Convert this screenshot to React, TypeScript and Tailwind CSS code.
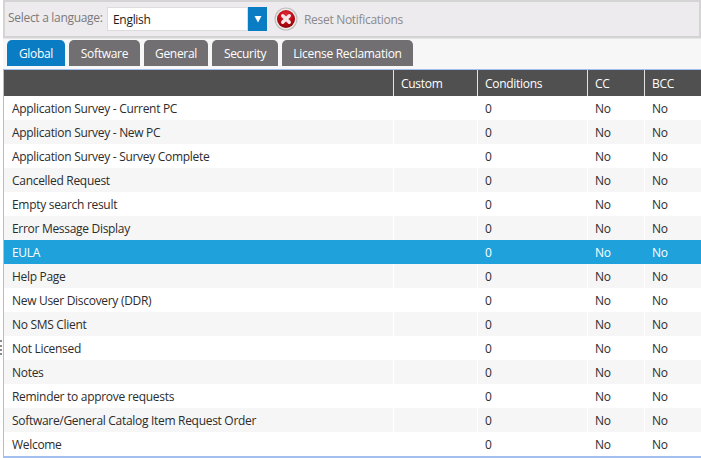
const tabs = [
  { label: "Software", width: "w-[71px]" },
  { label: "General", width: "w-[64px]" },
  { label: "Security", width: "w-[66px]" },
  { label: "License Reclamation", width: "w-[131px]" },
];

const rows = [
  "Application Survey - Current PC",
  "Application Survey - New PC",
  "Application Survey - Survey Complete",
  "Cancelled Request",
  "Empty search result",
  "Error Message Display",
  "EULA",
  "Help Page",
  "New User Discovery (DDR)",
  "No SMS Client",
  "Not Licensed",
  "Notes",
  "Reminder to approve requests",
  "Software/General Catalog Item Request Order",
  "Welcome",
];

const App = () => {
  return (
    <div className="relative w-[701px] h-[458px] overflow-hidden bg-white text-[12px] font-['Open_Sans',sans-serif] flex flex-col pl-[3px] tracking-[-0.3px]">
      {/* splitter grip */}
      <div className="absolute left-0 top-[340px] h-[15px] w-[2px] border-l-2 border-dotted border-[#8a8a8a]" />

      {/* Toolbar */}
      <div className="h-[38px] shrink-0 flex items-center bg-[#eeebee] border-2 border-[#d4d4d4] pl-[3px]">
        <span className="text-[#7a7a7a] mr-[3px] mb-[3px] w-[96px] shrink-0 whitespace-nowrap">Select a language:</span>
        <div className="flex items-stretch h-[24px] w-[160px]">
          <div className="flex-1 bg-white border border-[#dcdcdc] flex items-center pl-[5px] pt-[1px] text-[#1c1c1c]">English</div>
          <div className="w-[19px] bg-[#0a7cc4] flex items-center justify-center">
            <svg width="8" height="8" viewBox="0 0 8 8">
              <path d="M0.5 1h7L4 7.5z" fill="#ffffff" />
            </svg>
          </div>
        </div>
        <svg className="ml-[7px]" width="24" height="24" viewBox="0 0 24 24">
          <defs>
            <radialGradient id="reset-red" cx="50%" cy="30%" r="70%">
              <stop offset="0%" stopColor="#e2303a" />
              <stop offset="60%" stopColor="#bd0a14" />
              <stop offset="100%" stopColor="#8c0208" />
            </radialGradient>
          </defs>
          <circle cx="12" cy="12" r="11.5" fill="#bdbdbd" />
          <circle cx="12" cy="12" r="10.4" fill="#ececec" />
          <circle cx="12" cy="12" r="9" fill="url(#reset-red)" />
          <path d="M8.7 8.7L15.3 15.3M15.3 8.7L8.7 15.3" stroke="#f6e8e8" strokeWidth="3.4" strokeLinecap="round" />
        </svg>
        <span className="ml-[6px] pt-[1px] text-[#8a8a8a]">Reset Notifications</span>
      </div>

      {/* Tabs */}
      <div className="h-[31px] shrink-0 flex items-end bg-[#f7f7f7] pl-[4px] pb-[3px] gap-[4px] border-t border-[#e6e6e6]">
        <div className="h-[26px] w-[58px] pt-[1px] rounded-t-[5px] bg-[#0a7cc4] text-white flex items-center justify-center">Global</div>
        {tabs.map((t) => (
          <div key={t.label} className={`h-[26px] ${t.width} pt-[1px] rounded-t-[5px] bg-[#716f71] text-white flex items-center justify-center whitespace-nowrap`}>
            {t.label}
          </div>
        ))}
      </div>

      {/* Grid */}
      <div className="flex-1 border-t border-b-2 border-l border-[#a3bff0] flex flex-col min-h-0">
        <div className="h-[26px] shrink-0 grid grid-cols-[389px_84px_110px_57px_1fr] bg-[#505050] text-white font-normal">
          <div />
          <div className="border-l border-[#e4e4e4] pl-[7px] pt-[1px] flex items-center">Custom</div>
          <div className="border-l border-[#e4e4e4] pl-[7px] pt-[1px] flex items-center">Conditions</div>
          <div className="border-l border-[#e4e4e4] pl-[7px] pt-[1px] flex items-center">CC</div>
          <div className="border-l border-[#e4e4e4] pl-[7px] pt-[1px] flex items-center">BCC</div>
        </div>
        {rows.map((name, i) => {
          const selected = name === "EULA";
          const rowBg = selected ? "bg-[#1fa1dc] text-white" : i % 2 === 1 ? "bg-[#f6f6f6] text-[#2c2c2c]" : "bg-white text-[#2c2c2c]";
          const line = selected ? "border-[#1fa1dc]" : "border-white";
          return (
            <div key={name} className={`h-[24px] shrink-0 grid grid-cols-[389px_84px_110px_57px_1fr] items-stretch ${rowBg}`}>
              <div className="pl-[8px] pt-[1px] flex items-center whitespace-nowrap">{name}</div>
              <div className={`border-l ${line}`} />
              <div className={`border-l ${line} pl-[7px] pt-[1px] flex items-center`}>0</div>
              <div className={`border-l ${line} pl-[7px] pt-[1px] flex items-center`}>No</div>
              <div className={`border-l ${line} pl-[7px] pt-[1px] flex items-center`}>No</div>
            </div>
          );
        })}
      </div>
    </div>
  );
};

export default App;
